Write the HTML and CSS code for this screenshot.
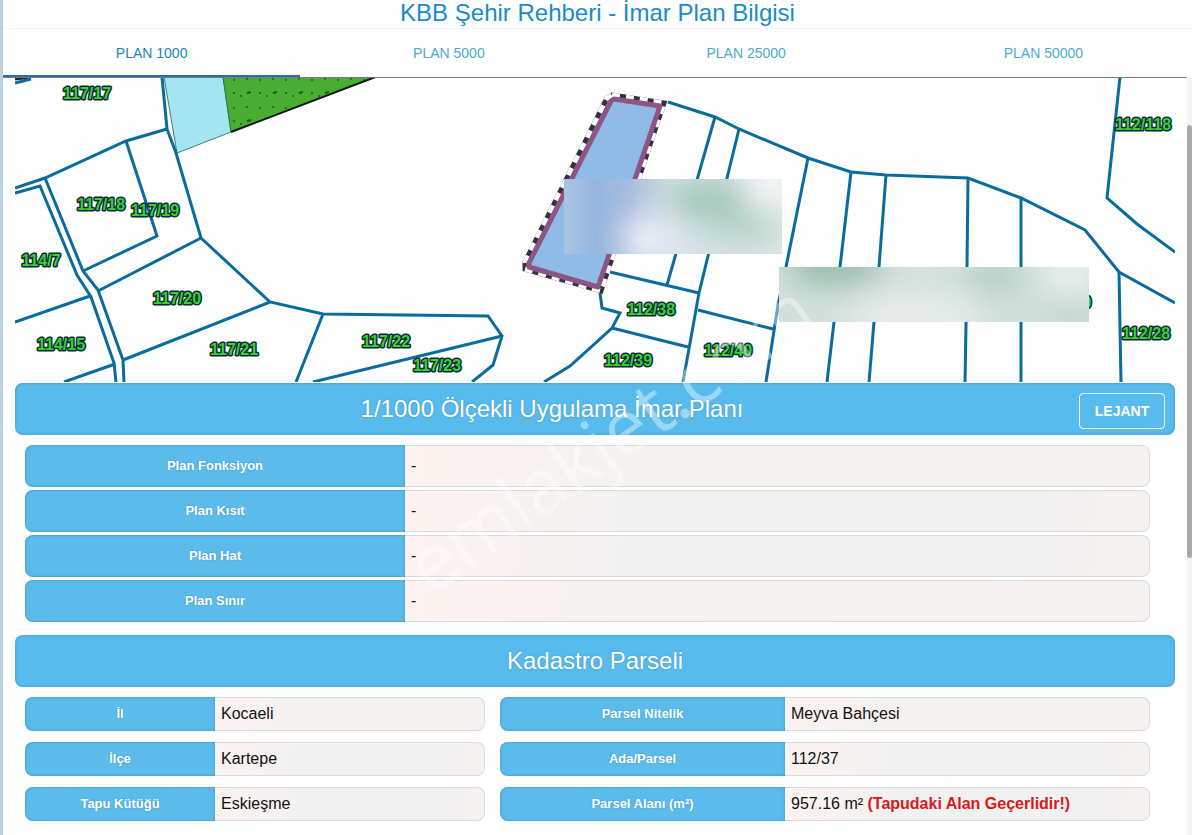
FILE: index.html
```
<!DOCTYPE html>
<html lang="tr">
<head>
    <meta charset="UTF-8">
    <meta name="viewport" content="width=device-width, initial-scale=1.0">
    <title>KBB Şehir Rehberi - İmar Plan Bilgisi</title>
    <link rel="stylesheet" href="styles.css">
</head>
<body>
    <div class="page">
        <h1 class="title">KBB Şehir Rehberi - İmar Plan Bilgisi</h1>
        <nav class="tabs">
            <a href="#plan1000" class="active">PLAN 1000</a>
            <a href="#plan5000">PLAN 5000</a>
            <a href="#plan25000">PLAN 25000</a>
            <a href="#plan50000">PLAN 50000</a>
        </nav>

        <main class="content" id="plan1000">
            <svg class="map" viewBox="15 78 1160 304" role="img" aria-label="Parsel haritası">
                <defs>
                    <pattern id="dots" x="225" y="78" width="26" height="28" patternUnits="userSpaceOnUse">
                        <rect width="26" height="28" fill="#4aad33"/>
                        <g fill="#1d5c18">
                            <circle cx="9" cy="2" r="1"/>
                            <circle cx="22" cy="1" r="1"/>
                            <circle cx="9" cy="15" r="1"/>
                            <circle cx="16" cy="18" r="1"/>
                            <circle cx="23" cy="15" r="1"/>
                        </g>
                        <path d="M22 15l4 -1" stroke="#1d5c18" stroke-width="2"/>
                    </pattern>
                    <filter id="soft" x="-50%" y="-50%" width="200%" height="200%">
                        <feGaussianBlur stdDeviation="15"/>
                    </filter>
                    <linearGradient id="edge">
                        <stop offset="0" stop-color="#a9c5e3"/>
                        <stop offset="0.15" stop-color="#94b5df"/>
                        <stop offset="0.3" stop-color="#a7bddc"/>
                        <stop offset="0.5" stop-color="#d5e0e6"/>
                        <stop offset="1" stop-color="#dbe6e5"/>
                    </linearGradient>
                    <clipPath id="maskA"><rect x="564" y="179" width="218" height="75"/></clipPath>
                    <clipPath id="maskB"><rect x="779" y="267" width="310" height="55"/></clipPath>
                </defs>

                <!-- alanlar -->
                <path class="water" d="M164 77L223 77L231 132L177 153Z"/>
                <path d="M223 77L231 132L378 77Z" fill="url(#dots)"/>
                <path d="M223 77L231 132" stroke="#2b7a4a"/>
                <path d="M231 132L378 76" stroke="#101810" stroke-width="2"/>
                <path d="M15 79L31 77" stroke="#222" stroke-width="3"/>

                <!-- parsel sınırları -->
                <g class="lines">
                    <path d="M15 83L31 79"/>
                    <path d="M162 77L167 129L176 153L201 238L270 302L323 314L488 316L502 336L493 365L472 382"/>
                    <path d="M167 129L126 141L45 178L15 188"/>
                    <path d="M15 193L40 186L77 275L91 297L114 363L116 382"/>
                    <path d="M45 178L83 271L98 290L123 360L124 382"/>
                    <path d="M126 141L157 236L83 271"/>
                    <path d="M201 238L98 291"/>
                    <path d="M270 302L123 360"/>
                    <path d="M15 322L90 296"/>
                    <path d="M64 382L115 364"/>
                    <path d="M323 314L296 382"/>
                    <path d="M502 336L313 382"/>
                    <path d="M668 102L715 117L739 129L808 158L851 172L886 175L968 178L1021 198L1085 230L1119 272L1175 303"/>
                    <path d="M1119 272L1121 382"/>
                    <path d="M1120 77L1107 198L1137 224L1175 252"/>
                    <path d="M715 117L667 285"/>
                    <path d="M739 129L699 293L683 382"/>
                    <path d="M610 272L699 293"/>
                    <path d="M600 293L602 308L620 313L612 328L570 366L544 382"/>
                    <path d="M612 328L688 347"/>
                    <path d="M698 310L773 329"/>
                    <path d="M808 158L786 267L778 305L766 382"/>
                    <path d="M851 172L840 267L834 322L827 382"/>
                    <path d="M886 175L879 267L874 322L869 382"/>
                    <path d="M968 178L967 267L965 382"/>
                    <path d="M1021 198L1021 382"/>
                </g>

                <!-- seçili parsel -->
                <path class="parcel-back" d="M612 95L664 103L601 291L525 269L525 262L607 98Z"/>
                <path class="parcel-dash" d="M612 95L664 103L601 291L525 269L525 262L607 98Z"/>
                <path class="parcel" d="M614 99L660 106L598 287L529 267L529 263L611 101Z"/>

                <g class="labels">
                    <text x="87" y="99">117/17</text>
                    <text x="101" y="210">117/18</text>
                    <text x="155" y="216">117/19</text>
                    <text x="41" y="266">114/7</text>
                    <text x="177" y="304">117/20</text>
                    <text x="61" y="350">114/15</text>
                    <text x="234" y="355">117/21</text>
                    <text x="386" y="347">117/22</text>
                    <text x="437" y="371">117/23</text>
                    <text x="651" y="315">112/38</text>
                    <text x="628" y="366">112/39</text>
                    <text x="728" y="356">112/40</text>
                    <text x="1143" y="130">112/118</text>
                    <text x="1146" y="339">112/28</text>
                    <text x="1087" y="308">0</text>
                </g>

                <g clip-path="url(#maskA)">
                    <rect x="564" y="179" width="218" height="75" fill="url(#edge)"/>
                    <g filter="url(#soft)">
                        <ellipse cx="706" cy="200" rx="40" ry="20" fill="#a0c8b8"/>
                        <ellipse cx="745" cy="228" rx="34" ry="14" fill="#b4d2c6"/>
                        <ellipse cx="648" cy="240" rx="26" ry="24" fill="#f0f2f8"/>
                        <ellipse cx="775" cy="183" rx="26" ry="18" fill="#fafcfc"/>
                    </g>
                </g>
                <g clip-path="url(#maskB)">
                    <rect x="779" y="267" width="310" height="55" fill="#d2e0dc"/>
                    <g filter="url(#soft)">
                        <ellipse cx="835" cy="266" rx="48" ry="20" fill="#96bcac"/>
                        <ellipse cx="995" cy="276" rx="30" ry="18" fill="#b4cfc6"/>
                        <ellipse cx="915" cy="315" rx="70" ry="20" fill="#eaeeed"/>
                        <ellipse cx="1070" cy="274" rx="26" ry="16" fill="#f2f6f5"/>
                        <ellipse cx="1070" cy="318" rx="22" ry="12" fill="#bdd2ca"/>
                    </g>
                </g>
            </svg>

            <section>
                <div class="banner">
                    <h2>1/1000 Ölçekli Uygulama İmar Planı</h2>
                    <button type="button">LEJANT</button>
                </div>
                <dl class="plan">
                    <div class="row"><dt>Plan Fonksiyon</dt><dd>-</dd></div>
                    <div class="row"><dt>Plan Kısıt</dt><dd>-</dd></div>
                    <div class="row"><dt>Plan Hat</dt><dd>-</dd></div>
                    <div class="row"><dt>Plan Sınır</dt><dd>-</dd></div>
                </dl>
            </section>

            <section>
                <div class="banner">
                    <h2>Kadastro Parseli</h2>
                </div>
                <dl class="parsel">
                    <div class="row"><dt>İl</dt><dd>Kocaeli</dd></div>
                    <div class="row wide"><dt>Parsel Nitelik</dt><dd>Meyva Bahçesi</dd></div>
                    <div class="row"><dt>İlçe</dt><dd>Kartepe</dd></div>
                    <div class="row wide"><dt>Ada/Parsel</dt><dd>112/37</dd></div>
                    <div class="row"><dt>Tapu Kütüğü</dt><dd>Eskieşme</dd></div>
                    <div class="row wide"><dt>Parsel Alanı (m²)</dt><dd>957.16 m² <b>(Tapudaki Alan Geçerlidir!)</b></dd></div>
                </dl>
            </section>
        </main>

        <div class="scrollbar"><div class="thumb"></div></div>
        <div class="watermark">emlakjet.com</div>
    </div>
</body>
</html>
```
FILE: styles.css
```
* {
    box-sizing: border-box;
}

body {
    margin: 0;
    font-family: "Liberation Sans", Arial, sans-serif;
    font-size: 16px;
    color: #111;
    background-color: #fefefe;
}

.page {
    position: relative;
    min-height: 100vh;
    overflow: hidden;
    border-left: 3px solid #bcd2de;
}

.title {
    margin: 0;
    height: 29px;
    line-height: 26px;
    font-size: 24px;
    font-weight: normal;
    text-align: center;
    color: #1a8bcb;
    border-bottom: 1px solid #f4f4f4;
}

.tabs {
    display: flex;
    height: 49px;
    border-bottom: 1px solid #777b80;
}

.tabs a {
    flex: 1;
    height: 48px;
    line-height: 48px;
    font-size: 14px;
    text-align: center;
    text-decoration: none;
    color: #4fa9cf;
}

.tabs a.active {
    color: #1f83bd;
    border-bottom: 2px solid #2a70a8;
}

.content {
    padding: 0 17px 14px 12px;
}

.map {
    display: block;
    width: 100%;
    height: auto;
    margin-bottom: 1px;
    fill: none;
}

.water {
    fill: #a3e6f2;
    stroke: #3f7d86;
}

.lines {
    stroke: #0a6c9c;
    stroke-width: 3;
}

.parcel {
    fill: #90bbe6;
    stroke: #8c5584;
    stroke-width: 5;
    stroke-linejoin: round;
}

.parcel-back {
    stroke: #3a2e42;
    stroke-width: 5;
}

.parcel-dash {
    stroke: #fff;
    stroke-width: 5;
    stroke-dasharray: 8 6;
}

.labels {
    font-size: 16px;
    font-weight: bold;
    text-anchor: middle;
    fill: #35d22c;
    stroke: #0c2a3c;
    stroke-width: 3;
    stroke-linejoin: round;
    paint-order: stroke;
}

.banner {
    display: flex;
    align-items: center;
    height: 52px;
    padding: 0 10px;
    border-radius: 8px;
    color: #fff;
    background-color: #58bbed;
    box-shadow: inset 0 0 3px #3a90b8;
}

.banner h2 {
    flex: 1;
    margin: 0;
    font-size: 24px;
    font-weight: normal;
    text-align: center;
    text-shadow: 0 0 2px #4794bb;
}

.banner button {
    width: 86px;
    height: 36px;
    margin-top: 4px;
    padding: 0;
    font-family: inherit;
    font-size: 14px;
    font-weight: bold;
    color: #fff;
    background: none;
    border: 1px solid #fff;
    border-radius: 4px;
    cursor: pointer;
}

.plan,
.parsel {
    display: grid;
    margin: 0;
    padding: 10px 25px 13px 10px;
}

.plan {
    gap: 3px;
}

.parsel {
    grid-template-columns: 460fr 650fr;
    gap: 11px 15px;
}

.row {
    display: flex;
    height: 34px;
    line-height: 32px;
}

.plan .row {
    height: 42px;
    line-height: 40px;
}

.row dt {
    width: 190px;
    padding-top: 1px;
    font-size: 13px;
    font-weight: bold;
    text-align: center;
    color: #fff;
    background-color: #5bbcec;
    border-radius: 8px 0 0 8px;
    box-shadow: inset 0 0 3px #3a90b8;
    text-shadow: 0 0 2px #4794bb;
}

.wide dt {
    width: 285px;
}

.plan dt {
    width: 380px;
}

.row dd {
    flex: 1;
    margin: 0;
    padding-left: 6px;
    background: linear-gradient(100deg, #fdf3f0, #f2f1f1 30%, #f1f1f1 80%, #f5f1ef);
    border: 1px solid #dadada;
    border-left: none;
    border-radius: 0 8px 8px 0;
}

.row:first-child dd,
.parsel .row:nth-child(2) dd,
.plan .row:last-child dd {
    background: linear-gradient(100deg, #fdf3f0, #f5f2f0 30%, #f6f1ef);
}

.row b {
    color: #d81920;
}

.scrollbar {
    position: absolute;
    top: 77px;
    right: 0;
    bottom: 0;
    width: 5px;
    padding-top: 48px;
    background-color: #f3f3f3;
}

.thumb {
    height: 433px;
    border-radius: 3px;
    background-color: #a9a9a9;
}

.watermark {
    position: absolute;
    left: 51%;
    top: 436px;
    font-family: "Open Sans", sans-serif;
    font-size: 76px;
    line-height: 1;
    color: #fff;
    opacity: 0.4;
    transform: translate(-50%, -50%) rotate(-35deg);
    pointer-events: none;
}
```
